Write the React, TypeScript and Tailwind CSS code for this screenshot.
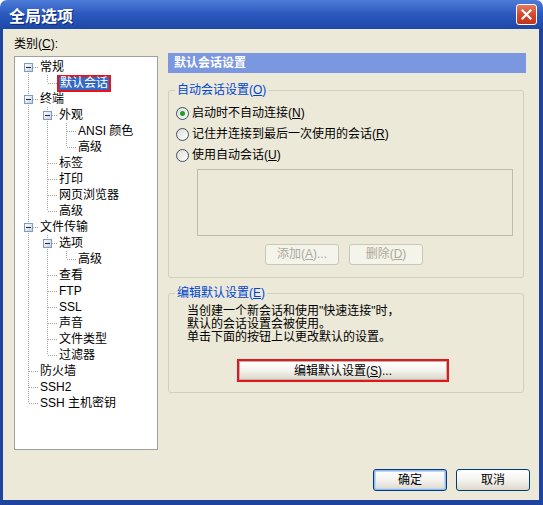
import React from 'react';

type Row = { label: string; level: number; kids?: boolean; last?: boolean; first?: boolean; guides?: boolean[]; selected?: boolean };

const rows: Row[] = [
  { label: '常规', level: 0, kids: true, first: true },
  { label: '默认会话', level: 1, last: true, guides: [true], selected: true },
  { label: '终端', level: 0, kids: true },
  { label: '外观', level: 1, kids: true, guides: [true] },
  { label: 'ANSI 颜色', level: 2, guides: [true, true] },
  { label: '高级', level: 2, last: true, guides: [true, true] },
  { label: '标签', level: 1, guides: [true] },
  { label: '打印', level: 1, guides: [true] },
  { label: '网页浏览器', level: 1, guides: [true] },
  { label: '高级', level: 1, last: true, guides: [true] },
  { label: '文件传输', level: 0, kids: true },
  { label: '选项', level: 1, kids: true, guides: [true] },
  { label: '高级', level: 2, last: true, guides: [true, true] },
  { label: '查看', level: 1, guides: [true] },
  { label: 'FTP', level: 1, guides: [true] },
  { label: 'SSL', level: 1, guides: [true] },
  { label: '声音', level: 1, guides: [true] },
  { label: '文件类型', level: 1, guides: [true] },
  { label: '过滤器', level: 1, last: true, guides: [true] },
  { label: '防火墙', level: 0 },
  { label: 'SSH2', level: 0 },
  { label: 'SSH 主机密钥', level: 0, last: true },
];

const dot = { stroke: '#a0a0a0', strokeDasharray: '1 1', shapeRendering: 'crispEdges' as const };

function Guide({ on }: { on: boolean }) {
  return (
    <svg width="19" height="16" className="shrink-0">
      {on && <line x1="9.5" y1="0" x2="9.5" y2="16" {...dot} />}
    </svg>
  );
}

function Connector({ row }: { row: Row }) {
  return (
    <svg width="19" height="16" className="shrink-0">
      <defs>
        <linearGradient id="bx" x1="0" y1="0" x2="1" y2="1">
          <stop offset="0" stopColor="#ffffff" />
          <stop offset="1" stopColor="#c4cfe0" />
        </linearGradient>
      </defs>
      <line x1="9.5" y1={row.first ? 8 : 0} x2="9.5" y2={row.last ? 8 : 16} {...dot} />
      <line x1="10" y1="8.5" x2="19" y2="8.5" {...dot} />
      {row.kids && (
        <g shapeRendering="crispEdges">
          <rect x="5.5" y="4.5" width="8" height="8" fill="url(#bx)" stroke="#7f9db9" />
          <line x1="7" y1="8.5" x2="12" y2="8.5" stroke="#1b2a4a" />
        </g>
      )}
    </svg>
  );
}

function Tree() {
  return (
    <div className="w-[144px] h-[394px] mt-[5px] bg-white border border-[#a0a0a0] pt-[2px] pl-[4px]">
      {rows.map((r, i) => (
        <div key={i} className="flex items-center h-[16px]">
          {(r.guides ?? []).map((g, j) => (
            <Guide key={j} on={g} />
          ))}
          <Connector row={r} />
          {r.selected ? (
            <span className="h-[17px] leading-[13px] px-[1px] border-2 border-[#e8141b] bg-[#316ac5] text-white whitespace-nowrap">
              {r.label}
            </span>
          ) : (
            <span className="leading-[16px] px-[2px] whitespace-nowrap text-black">{r.label}</span>
          )}
        </div>
      ))}
    </div>
  );
}

function Radio({ checked, children }: { checked?: boolean; children: React.ReactNode }) {
  return (
    <div className="flex items-center h-[13px]">
      <span className="w-[13px] h-[13px] rounded-full border border-[#3e4f66] bg-linear-to-br from-[#dcdcd6] to-white flex items-center justify-center shrink-0">
        {checked && <span className="w-[5px] h-[5px] rounded-full bg-[#21a121]" />}
      </span>
      <span className="ml-[3px] leading-[13px] whitespace-nowrap">{children}</span>
    </div>
  );
}

function XpButton({ children, def, className = '' }: { children: React.ReactNode; def?: boolean; className?: string }) {
  return (
    <button
      className={`rounded-[3px] border border-[#003c74] bg-linear-to-b from-white via-[#f4f3ee] to-[#dcd8cc] text-black text-[12px] ${def ? 'shadow-[inset_0_0_0_1px_#97b8ef,inset_0_0_0_2px_#bcd4f6]' : ''} ${className}`}
    >
      {children}
    </button>
  );
}

function DisabledButton({ children }: { children: React.ReactNode }) {
  return (
    <button className="w-[74px] h-[21px] rounded-[3px] border border-[#c9c7ba] bg-[#f5f4ea] text-[#aca899] text-[12px] leading-[13px]">
      {children}
    </button>
  );
}

export default function App() {
  return (
    <div className="w-[543px] h-[505px] bg-white font-['Liberation_Sans','Noto_Sans_CJK_SC',sans-serif] text-[12px] text-black">
      <div className="w-full h-full flex flex-col rounded-t-[7px] overflow-hidden">
        {/* 标题栏 */}
        <div className="h-[29px] shrink-0 flex items-center justify-between bg-linear-to-b from-[#4d7cd8] via-[#2a58be] to-[#1e48a6] pl-[9px] pr-[6px]">
          <span className="text-white text-[16px] font-bold leading-[16px] [text-shadow:1px_1px_0_#0d2a72] font-['Noto_Sans_CJK_SC',sans-serif]">
            全局选项
          </span>
          <span className="w-[21px] h-[21px] rounded-[3px] border border-white bg-linear-to-b from-[#e47a5e] via-[#d9472b] to-[#c2341a] flex items-center justify-center">
            <svg width="11" height="11" viewBox="0 0 11 11">
              <path d="M1.5 1.5 L9.5 9.5 M9.5 1.5 L1.5 9.5" stroke="white" strokeWidth="2.2" strokeLinecap="square" />
            </svg>
          </span>
        </div>

        {/* 主体 */}
        <div className="flex-1 flex flex-col bg-[#ece9d8] border-l-[3px] border-r-[4px] border-b-[5px] border-[#1e44a0]">
          <div className="flex">
            <div className="pl-[11px] pt-[8px]">
              <div className="leading-[14px]">
                类别(<u>C</u>):
              </div>
              <Tree />
            </div>

            <div className="ml-[10px] mt-[24px] w-[358px]">
              <div className="h-[20px] bg-[#7b97e0] text-white font-bold leading-[20px] pl-[6px]">默认会话设置</div>

              <fieldset className="mt-[10px] w-[356px] border border-[#d0d0bf] rounded-[3px] px-0 pb-[12px]">
                <legend className="ml-[6px] px-[2px] leading-[14px] text-[#0046d5]">
                  自动会话设置(<u>O</u>)
                </legend>
                <div className="pl-[7px] mt-[10px] flex flex-col gap-[8px]">
                  <Radio checked>
                    启动时不自动连接(<u>N</u>)
                  </Radio>
                  <Radio>
                    记住并连接到最后一次使用的会话(<u>R</u>)
                  </Radio>
                  <Radio>
                    使用自动会话(<u>U</u>)
                  </Radio>
                </div>
                <div className="ml-[28px] mt-[7px] w-[316px] h-[67px] border border-[#bdbcb0]" />
                <div className="ml-[96px] mt-[8px] flex gap-[10px]">
                  <DisabledButton>
                    添加(<u>A</u>)...
                  </DisabledButton>
                  <DisabledButton>
                    删除(<u>D</u>)
                  </DisabledButton>
                </div>
              </fieldset>

              <fieldset className="mt-[8px] w-[356px] border border-[#d0d0bf] rounded-[3px] px-0 pb-[10px]">
                <legend className="ml-[6px] px-[2px] leading-[14px] text-[#0046d5]">
                  编辑默认设置(<u>E</u>)
                </legend>
                <div className="ml-[18px] mt-[5px] leading-[13px]">
                  <p>当创建一个新会话和使用"快速连接"时，</p>
                  <p>默认的会话设置会被使用。</p>
                  <p>单击下面的按钮上以更改默认的设置。</p>
                </div>
                <div className="ml-[68px] mt-[15px] w-[212px] h-[23px] border-2 border-[#e8141b]">
                  <XpButton className="w-full h-full !border-[#b8b5a8] !rounded-none">
                    编辑默认设置(<u>S</u>)...
                  </XpButton>
                </div>
              </fieldset>
            </div>
          </div>

          <div className="mt-auto flex justify-end gap-[9px] pr-[9px] pb-[9px]">
            <XpButton def className="w-[74px] h-[22px]">
              确定
            </XpButton>
            <XpButton className="w-[74px] h-[22px]">取消</XpButton>
          </div>
        </div>
      </div>
    </div>
  );
}
